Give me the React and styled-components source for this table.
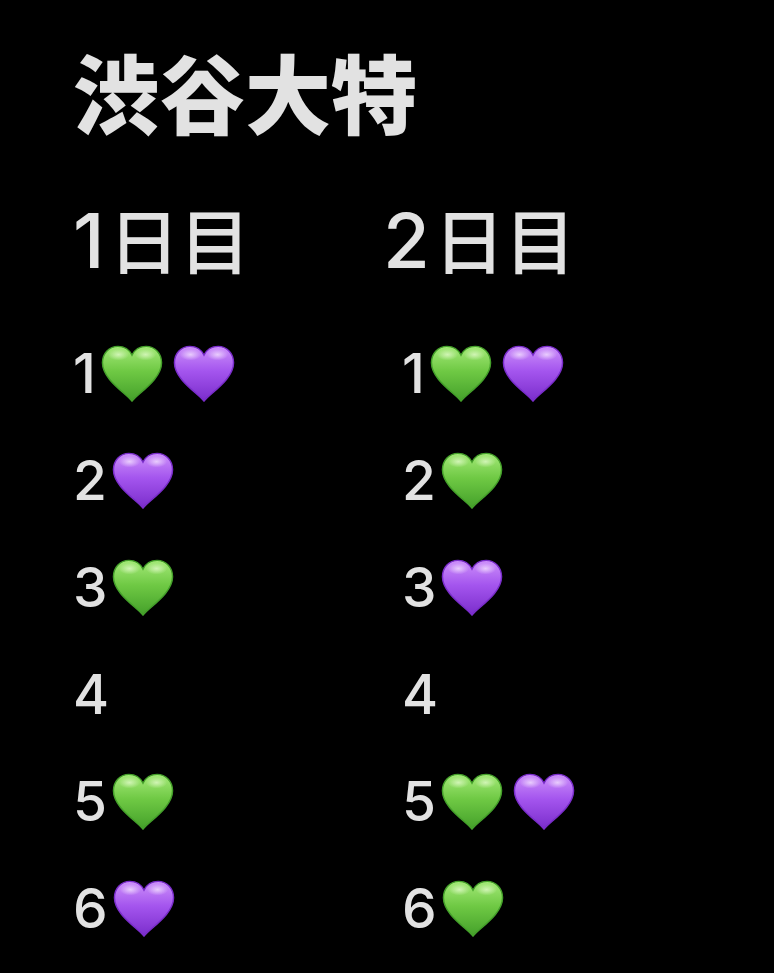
import React from 'react';
import styled, { createGlobalStyle } from 'styled-components';

const Global = createGlobalStyle`
  html, body {
    margin: 0;
    padding: 0;
    background: #000;
  }
  body {
    font-family: "Noto Sans CJK JP", "Noto Sans", sans-serif;
    color: #e2e2e2;
  }
`;

const Page = styled.div`
  width: 774px;
  height: 973px;
  background: #000;
  padding: 33px 0 0 73px;
  box-sizing: border-box;
  overflow: hidden;
`;

const Title = styled.h1`
  margin: 0;
  font-size: 86px;
  line-height: 116px;
  font-weight: 900;
`;

const Columns = styled.div`
  display: grid;
  grid-template-columns: 310px 1fr;
  margin-top: 43px;
`;

const Column = styled.div`
  display: flex;
  flex-direction: column;
`;

const Heading = styled.h2`
  margin: 0 0 38px;
  font-size: 71px;
  line-height: 90px;
  height: 90px;
  font-weight: 500;
  white-space: nowrap;
`;

const DayNum = styled.span`
  font-family: Inter, "Noto Sans", sans-serif;
  font-size: 76px;
  font-weight: 500;
  margin-right: 4px;
`;

const Row = styled.div`
  display: flex;
  align-items: center;
  height: 107px;
  padding-left: ${p => p.$indent || 0}px;
`;

const Num = styled.span`
  font-family: Inter, "Noto Sans", sans-serif;
  font-size: 55px;
  line-height: 1;
  font-weight: 540;
  margin-right: 5px;
`;

const Hearts = styled.span`
  display: flex;
  gap: 10px;
`;

const COLORS = {
  green: { top: '#a4e978', mid: '#6fc944', edge: '#44a02a', shine: '#e0fac8' },
  purple: { top: '#cd90fa', mid: '#a455ee', edge: '#7a2dcb', shine: '#f3e0ff' },
};

const Heart = ({ color }) => {
  const c = COLORS[color];
  const id = `h-${color}`;
  return (
    <svg width="62" height="60" viewBox="0 0 64 60">
      <defs>
        <linearGradient id={`${id}-f`} x1="0" y1="0" x2="0" y2="1">
          <stop offset="0" stopColor={c.top} />
          <stop offset="0.45" stopColor={c.mid} />
          <stop offset="1" stopColor={c.edge} />
        </linearGradient>
        <radialGradient id={`${id}-s`} cx="0.5" cy="0.5" r="0.5">
          <stop offset="0" stopColor={c.shine} stopOpacity="0.8" />
          <stop offset="1" stopColor={c.shine} stopOpacity="0" />
        </radialGradient>
      </defs>
      <path
        d="M32 58 C 26 50, 1.5 36, 1.5 18.5 C 1.5 8.5, 8.5 1.5, 17.5 1.5 C 24.5 1.5, 29.5 5.5, 32 10.5 C 34.5 5.5, 39.5 1.5, 46.5 1.5 C 55.5 1.5, 62.5 8.5, 62.5 18.5 C 62.5 36, 38 50, 32 58 Z"
        fill={`url(#${id}-f)`}
        stroke={c.edge}
        strokeWidth="1.5"
      />
      <ellipse cx="18" cy="10" rx="11" ry="6" fill={`url(#${id}-s)`} />
      <ellipse cx="46" cy="10" rx="11" ry="6" fill={`url(#${id}-s)`} />
    </svg>
  );
};

const days = [
  {
    label: '日目',
    day: 1,
    indent: 0,
    rows: [['green', 'purple'], ['purple'], ['green'], [], ['green'], ['purple']],
  },
  {
    label: '日目',
    day: 2,
    indent: 19,
    rows: [['green', 'purple'], ['green'], ['purple'], [], ['green', 'purple'], ['green']],
  },
];

export default function App() {
  return (
    <>
      <Global />
      <Page>
        <Title>渋谷大特</Title>
        <Columns>
          {days.map(d => (
            <Column key={d.day}>
              <Heading>
                <DayNum>{d.day}</DayNum>
                {d.label}
              </Heading>
              {d.rows.map((hearts, i) => (
                <Row key={i} $indent={d.indent}>
                  <Num>{i + 1}</Num>
                  <Hearts>
                    {hearts.map((h, j) => (
                      <Heart key={j} color={h} />
                    ))}
                  </Hearts>
                </Row>
              ))}
            </Column>
          ))}
        </Columns>
      </Page>
    </>
  );
}
